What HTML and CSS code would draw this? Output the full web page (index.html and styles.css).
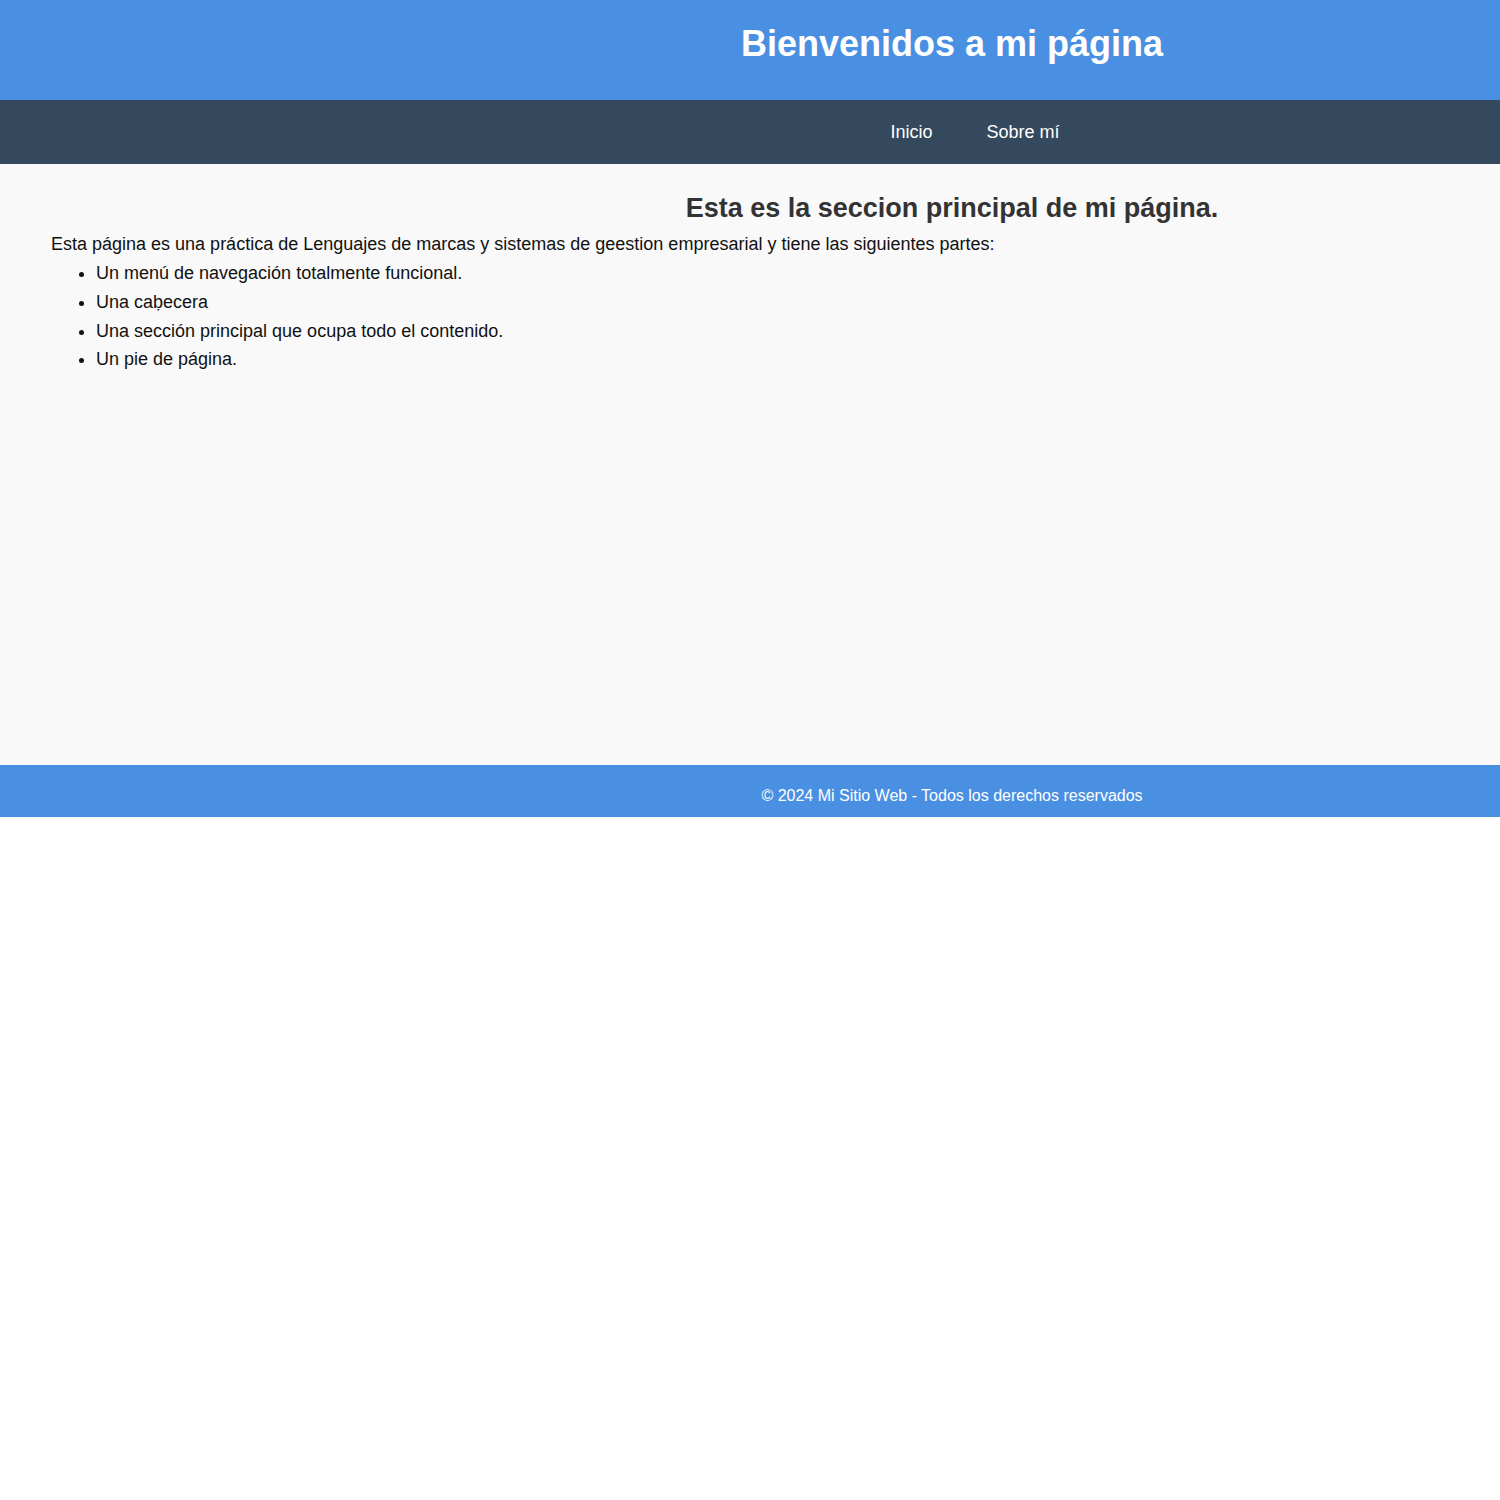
FILE: index.html
```html
<!DOCTYPE html>
<html lang="es">
<head>
<meta charset="utf-8">
<title>Mi página</title>
<link rel="stylesheet" href="styles.css">
</head>
<body>
<header class="site-header">
  <h1 class="site-title">Bienvenidos a mi página</h1>
</header>
<nav class="site-nav">
  <ul class="nav-list">
    <li><a class="nav-link" href="#">Inicio</a></li>
    <li><a class="nav-link" href="#">Sobre mí</a></li>
  </ul>
</nav>
<main class="site-main">
  <h2 class="main-title">Esta es la seccion principal de mi página.</h2>
  <p class="main-text">Esta página es una práctica de Lenguajes de marcas y sistemas de geestion empresarial y tiene las siguientes partes:</p>
  <ul class="parts">
    <li>Un menú de navegación totalmente funcional.</li>
    <li>Una caḅecera</li>
    <li>Una sección principal que ocupa todo el contenido.</li>
    <li>Un pie de página.</li>
  </ul>
</main>
<footer class="site-footer">
  <p class="footer-text">© 2024 Mi Sitio Web - Todos los derechos reservados</p>
</footer>
</body>
</html>
```
FILE: styles.css
```css
* { box-sizing: border-box; }
html, body {
  margin: 0;
  padding: 0;
  background: #ffffff;
}
body {
  font-family: "Liberation Sans", Arial, sans-serif;
  font-size: 18px;
  line-height: 1.6;
  color: #111111;
}
.site-header {
  background: #4a90e2;
  color: #ffffff;
  height: 100px;
  padding: 15px 0 0 404px;
  text-align: center;
}
.site-title {
  margin: 0;
  font-size: 36px;
  font-weight: bold;
}
.site-nav {
  background: #34495e;
  height: 64px;
  padding-left: 450px;
  display: flex;
  align-items: center;
  justify-content: center;
}
.nav-list {
  list-style: none;
  margin: 0;
  padding: 0;
  display: flex;
  gap: 54px;
  line-height: normal;
}
.nav-link {
  color: #ffffff;
  text-decoration: none;
  font-size: 18px;
}
.site-main {
  background: #f9f9f9;
  min-height: 601px;
  padding: 23px 50px 20px 51px;
}
.main-title {
  margin: 0;
  padding-left: 403px;
  text-align: center;
  font-size: 27px;
  font-weight: bold;
  color: #333333;
}
.main-text {
  margin: 0;
}
.parts {
  margin: 0;
  padding-left: 45px;
}
.site-footer {
  background: #4a90e2;
  color: #ffffff;
  height: 52px;
  padding: 18px 0 0 404px;
  text-align: center;
}
.footer-text {
  margin: 0;
  font-size: 16px;
}
```
